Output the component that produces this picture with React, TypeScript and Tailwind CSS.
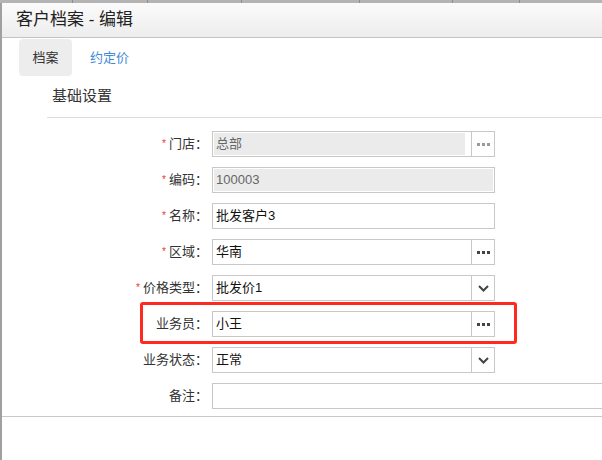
import React from 'react'

const font = { fontFamily: '"Liberation Sans", "Noto Sans CJK SC", sans-serif' }

function Dots({ muted }: { muted?: boolean }) {
  const c = muted ? 'bg-[#9a9a9a]' : 'bg-[#444]'
  return (
    <div className="flex gap-[2px]">
      <span className={`w-[3px] h-[3px] ${c}`} />
      <span className={`w-[3px] h-[3px] ${c}`} />
      <span className={`w-[3px] h-[3px] ${c}`} />
    </div>
  )
}

function Chevron() {
  return (
    <svg width="11" height="7" viewBox="0 0 11 7">
      <path d="M1 1 L5.5 5.5 L10 1" fill="none" stroke="#444" strokeWidth="2" />
    </svg>
  )
}

function Row({ label, required, children }: { label: string; required?: boolean; children: React.ReactNode }) {
  return (
    <div className="flex items-center h-[26px]">
      <div className="w-[206px] shrink-0 text-right text-[13px] text-[#333] flex items-center justify-end">
        {required && <span className="text-[#e33] text-[10px] mr-[3px] leading-none">*</span>}
        <span>{label}：</span>
      </div>
      <div className="ml-[4px] shrink-0">{children}</div>
    </div>
  )
}

function Box({ value, button, disabled, wide }: { value?: string; button?: 'dots' | 'select'; disabled?: boolean; wide?: boolean }) {
  return (
    <div className={`flex h-[26px] border border-[#c8c8c8] bg-white ${wide ? 'w-[400px]' : 'w-[283px]'}`}>
      <div className="flex-1 p-[1px] flex">
        <div
          className={`flex-1 flex items-center pl-[2px] text-[13px] ${disabled ? 'bg-[#ebebeb] text-[#666]' : 'text-[#111]'} ${button && disabled ? 'mr-[5px]' : ''}`}
        >
          {value}
        </div>
      </div>
      {button && (
        <div className="w-[23px] border-l border-[#c8c8c8] flex items-center justify-center">
          {button === 'dots' ? <Dots muted={disabled} /> : <Chevron />}
        </div>
      )}
    </div>
  )
}

export default function App() {
  return (
    <div className="w-[602px] h-[460px] bg-white overflow-hidden relative flex flex-col" style={font}>
      <div className="h-[3px] bg-[#b4b4b4] flex shrink-0">
        <div className="w-[73px] border-r border-[#8c8c8c]" />
        <div className="w-[75px] border-r border-[#8c8c8c]" />
        <div className="w-[94px] border-r border-[#8c8c8c]" />
        <div className="w-[118px] border-r border-[#8c8c8c]" />
        <div className="w-[93px] border-r border-[#8c8c8c]" />
        <div className="w-[67px] border-r border-[#8c8c8c]" />
      </div>
      <div className="flex flex-1 min-h-0">
        <div className="w-[2px] shrink-0 bg-[#a0a0a0]" />
        <div className="flex-1 min-w-0 flex flex-col overflow-hidden">
          <div className="h-[35px] shrink-0 border-b border-[#c4c4c4] bg-gradient-to-b from-[#fbfbfb] to-[#ededed] flex items-center pl-[14px] text-[17px] text-[#222]">
            客户档案 - 编辑
          </div>
          <div className="flex pl-[17px] pt-[1px]">
            <div className="w-[53px] h-[37px] bg-[#ededed] rounded-[4px] flex items-center justify-center text-[13px] text-[#333]">
              档案
            </div>
            <div className="h-[37px] flex items-center pl-[18px] text-[13px] text-[#3f8bd6]">约定价</div>
          </div>
          <div className="ml-[45px] h-[42px] border-b border-[#dddddd] flex items-center pl-[5px] text-[15px] text-[#333]">
            基础设置
          </div>
          <div className="flex flex-col gap-[10px] pt-[13px] pb-[7px] border-b border-[#c8c8c8]">
            <Row label="门店" required>
              <Box value="总部" button="dots" disabled />
            </Row>
            <Row label="编码" required>
              <Box value="100003" disabled />
            </Row>
            <Row label="名称" required>
              <Box value="批发客户3" />
            </Row>
            <Row label="区域" required>
              <Box value="华南" button="dots" />
            </Row>
            <Row label="价格类型" required>
              <Box value="批发价1" button="select" />
            </Row>
            <Row label="业务员">
              <Box value="小王" button="dots" />
            </Row>
            <Row label="业务状态">
              <Box value="正常" button="select" />
            </Row>
            <Row label="备注">
              <Box wide />
            </Row>
          </div>
        </div>
      </div>
      <div className="absolute left-[140px] top-[302px] w-[377px] h-[42px] border-[3px] border-[#ff2a1f] rounded-[3px]" />
    </div>
  )
}
